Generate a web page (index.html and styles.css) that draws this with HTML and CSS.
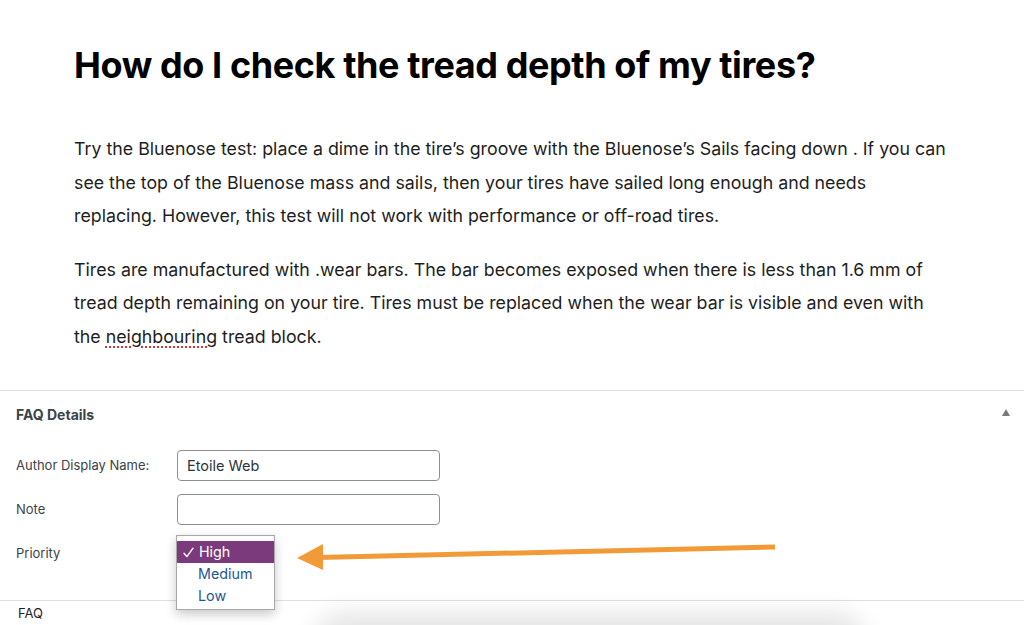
FILE: index.html
```html
<!DOCTYPE html>
<html lang="en">
<head>
<meta charset="utf-8">
<title>FAQ editor</title>
<link rel="stylesheet" href="styles.css">
</head>
<body>
<main class="editor">
  <article class="content">
    <h1 class="title">How do I check the tread depth of my tires?</h1>
    <p class="para">Try the Bluenose test: place a dime in the tire’s groove with the Bluenose’s Sails facing down . If you can see the top of the Bluenose mass and sails, then your tires have sailed long enough and needs replacing. However, this test will not work with performance or off-road tires.</p>
    <p class="para">Tires are manufactured with .wear bars. The bar becomes exposed when there is less than 1.6 mm of tread depth remaining on your tire. Tires must be replaced when the wear bar is visible and even with the <span class="spell">neighbouring</span> tread block.</p>
  </article>
  <section class="panel">
    <header class="panel-head">
      <h2 class="panel-title">FAQ Details</h2>
      <span class="caret"></span>
    </header>
    <div class="fields">
      <div class="row">
        <label class="label">Author Display Name:</label>
        <div class="input">Etoile Web</div>
      </div>
      <div class="row">
        <label class="label">Note</label>
        <div class="input"></div>
      </div>
      <div class="row">
        <label class="label">Priority</label>
        <div class="select-wrap">
          <div class="select"></div>
          <ul class="menu">
            <li class="opt sel"><svg class="check" width="11" height="11" viewBox="0 0 11 11"><path d="M1 6.2 L3.9 9.6 L10 1.2" fill="none" stroke="#fff" stroke-width="1.4" stroke-linecap="round" stroke-linejoin="round"/></svg>High</li>
            <li class="opt">Medium</li>
            <li class="opt">Low</li>
          </ul>
        </div>
      </div>
    </div>
  </section>
  <footer class="bar">FAQ</footer>
  <div class="blur"></div>
  <svg class="arrow" width="1024" height="625" viewBox="0 0 1024 625">
    <line x1="775" y1="547" x2="318" y2="557.5" stroke="#f39a38" stroke-width="5" stroke-linecap="butt"/>
    <polygon points="297,558 323,544 323,570" fill="#f39a38"/>
  </svg>
</main>
</body>
</html>
```
FILE: styles.css
```css
* { box-sizing: border-box; }
html, body { margin: 0; padding: 0; background: #fff; }
body { font-family: Inter, "Noto Sans", "Liberation Sans", sans-serif; color: #1e1e1e; overflow: hidden; }
.editor { position: relative; width: 1024px; height: 625px; overflow: hidden; }
.content { padding: 41px 76px 0 74px; height: 390px; }
.title { margin: 0; font-size: 36px; font-weight: 700; line-height: 48px; color: #000; letter-spacing: -0.4px; }
.para { margin: 43px 0 0; font-size: 17.8px; line-height: 33.5px; color: #1e1e1e; letter-spacing: 0; }
.para + .para { margin-top: 20px; }
.spell { text-decoration: underline dotted #d63638; text-decoration-thickness: 1.5px; text-underline-offset: 4px; }
.panel { border-top: 1px solid #e0e0e0; height: 210px; }
.panel-head { display: flex; align-items: center; justify-content: space-between; padding: 0 12px 0 16px; height: 46px; }
.panel-title { margin: 0; font-size: 14px; font-weight: 700; color: #3c434a; }
.caret { width: 0; height: 0; border-left: 4.5px solid transparent; border-right: 4.5px solid transparent; border-bottom: 7px solid #787c82; margin: 0 2px 4px 0; }
.fields { display: flex; flex-direction: column; gap: 14px; padding: 13px 0 0 16px; }
.row { display: flex; align-items: center; height: 30px; }
.label { width: 161px; font-size: 13px; color: #3c434a; }
.input { width: 263px; height: 31px; border: 1px solid #8c8f94; border-radius: 4px; padding: 0 9px; display: flex; align-items: center; font-size: 14.5px; color: #2c3338; }
.select-wrap { position: relative; width: 99px; height: 30px; }
.select { width: 98px; height: 26px; margin-top: 3px; border-right: 2px solid #2f4d85; }
.menu { position: absolute; left: -1px; top: -3px; margin: 0; padding: 5px 0 2px; list-style: none; width: 99px; background: #fff; border: 1px solid #a8a8a8; box-shadow: 0 4px 10px rgba(0,0,0,0.22); }
.opt { height: 22px; line-height: 22px; font-size: 14.3px; color: #1f5796; padding-left: 21px; display: flex; align-items: center; }
.opt.sel { background: #7b3a7c; color: #fff; padding-left: 6px; }
.check { margin-right: 5px; }
.bar { border-top: 1px solid #e0e0e0; padding: 4px 0 0 18px; font-size: 13px; color: #1d2327; height: 25px; }
.blur { position: absolute; left: 330px; top: 628px; width: 520px; height: 30px; border-radius: 15px; box-shadow: 0 0 24px 16px rgba(0,0,0,0.10); background: rgba(0,0,0,0.10); }
.arrow { position: absolute; left: 0; top: 0; pointer-events: none; }
```
